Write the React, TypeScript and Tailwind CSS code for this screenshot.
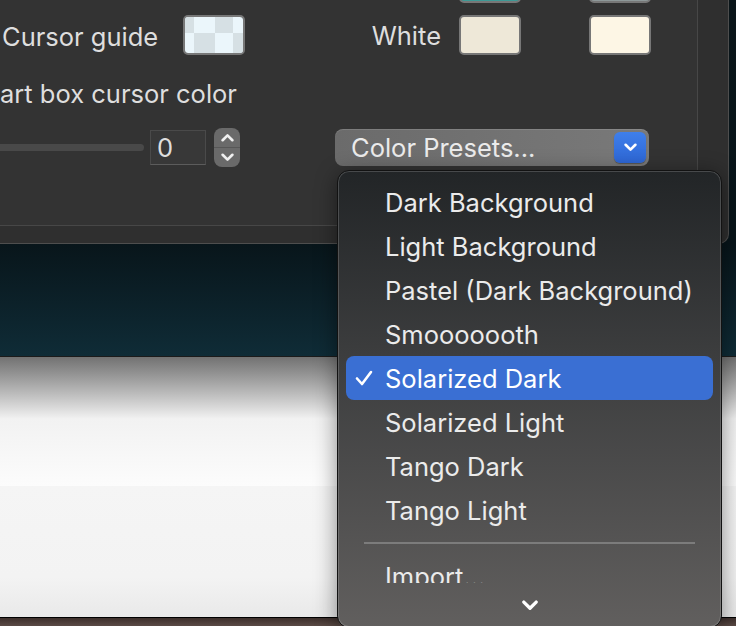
import React from 'react';

const presets = [
  'Dark Background',
  'Light Background',
  'Pastel (Dark Background)',
  'Smooooooth',
  'Solarized Dark',
  'Solarized Light',
  'Tango Dark',
  'Tango Light',
];

function Chevron({ dir = 'down', className = '', width = 2 }: { dir?: 'up' | 'down'; className?: string; width?: number }) {
  return (
    <svg viewBox="0 0 12 8" className={className} fill="none" stroke="currentColor" strokeWidth={width} strokeLinecap="round" strokeLinejoin="round">
      {dir === 'down' ? <polyline points="1.5,1.5 6,6 10.5,1.5" /> : <polyline points="1.5,6.5 6,2 10.5,6.5" />}
    </svg>
  );
}

function Swatch({ color }: { color: string }) {
  return <div className="w-[62px] h-[40px] shrink-0 rounded-[5px] border-2 border-[#777777]" style={{ backgroundColor: color }} />;
}

function CheckerSwatch() {
  // transparent colour well: light checker pattern
  return (
    <div className="w-[62px] h-[40px] shrink-0 rounded-[5px] border-2 border-[#777777] overflow-hidden">
      <svg width="58" height="36" viewBox="0 0 58 36">
        <rect width="58" height="36" fill="#ebf6fb" />
        <rect x="0" y="0" width="9" height="16" fill="#d6e0e4" />
        <rect x="30" y="0" width="18" height="16" fill="#d6e0e4" />
        <rect x="9" y="16" width="21" height="20" fill="#d6e0e4" />
        <rect x="48" y="16" width="10" height="20" fill="#d6e0e4" />
      </svg>
    </div>
  );
}

function PrefsWindow() {
  return (
    <div className="w-[729px] h-[244px] bg-[#2f2f2f] border-r border-b border-[#4e4e4e] rounded-br-[10px] overflow-hidden">
      <div className="w-[698px] h-[226px] bg-[#333333] border-r border-b border-[#474747] overflow-hidden text-[25.5px] text-[#dedede]">
        <div className="flex flex-col -mt-[37px]">
          {/* previous row, mostly scrolled out */}
          <div className="flex h-[40px]">
            <div className="w-[459px] shrink-0" />
            <Swatch color="#3d9a96" />
            <div className="w-[68px] shrink-0" />
            <Swatch color="#8e9899" />
          </div>

          <div className="flex items-center h-[40px] mt-[12px]">
            <div className="w-[183px] shrink-0 pl-[2px] pt-[3px] leading-none whitespace-nowrap">Cursor guide</div>
            <CheckerSwatch />
            <div className="w-[196px] shrink-0 pt-[1px] text-right leading-none">White</div>
            <div className="w-[18px] shrink-0" />
            <Swatch color="#eee8d8" />
            <div className="w-[68px] shrink-0" />
            <Swatch color="#fdf6e5" />
          </div>

          <div className="h-[30px] mt-[24px] leading-[30px] whitespace-nowrap">art box cursor color</div>

          <div className="flex items-center h-[39px] mt-[19px]">
            <div className="-ml-[10px] w-[154px] h-[7px] shrink-0 rounded-full bg-[#494949]" />
            <div className="ml-[6px] w-[56px] h-[35px] shrink-0 bg-[#383838] border border-[#4a4a4a] border-b-[#5c5c5c] flex items-center pl-[6px] leading-none">
              0
            </div>
            <div className="ml-[8px] w-[26px] h-[39px] shrink-0 rounded-[8px] bg-[#6a6a6a] flex flex-col text-[#f0f0f0]">
              <div className="flex-1 flex items-center justify-center">
                <Chevron dir="up" width={2.4} className="w-[13px] h-[9px]" />
              </div>
              <div className="h-px bg-[#575757]" />
              <div className="flex-1 flex items-center justify-center">
                <Chevron dir="down" width={2.4} className="w-[13px] h-[9px]" />
              </div>
            </div>
            <div className="ml-[95px] w-[314px] h-[37px] shrink-0 rounded-[8px] bg-gradient-to-r from-[#6b6b6b] to-[#797979] shadow-[inset_0_1px_0_rgba(255,255,255,0.12)] flex items-center pl-[16px] pr-[3px]">
              <span className="flex-1 leading-none text-[#ebebeb] whitespace-nowrap">Color Presets...</span>
              <div className="w-[32px] h-[31px] rounded-[6px] bg-gradient-to-b from-[#3f7fea] to-[#2e67d6] flex items-center justify-center text-white shadow-[0_1px_1px_rgba(0,0,0,0.3)]">
                <Chevron dir="down" width={2.4} className="w-[13px] h-[9px]" />
              </div>
            </div>
          </div>
        </div>
      </div>
    </div>
  );
}

function PresetsMenu() {
  return (
    <div className="absolute left-[337px] top-[170px] w-[385px] h-[458px] rounded-[12px] border border-[#121212] bg-gradient-to-b from-[#222527] via-[#3c3d3e] via-[40%] to-[#615f5e] shadow-[inset_0_0_0_1px_rgba(255,255,255,0.17),0_4px_22px_rgba(0,0,0,0.45)] overflow-hidden text-[25.5px] text-[#ebebeb]">
      <div className="h-[412px] overflow-hidden pt-[9px]">
        {presets.map((name) => {
          const selected = name === 'Solarized Dark';
          return (
            <div
              key={name}
              className={`mx-[8px] h-[44px] rounded-[8px] flex items-center whitespace-nowrap ${selected ? 'bg-[#3a6fd3] text-white' : ''}`}
            >
              <div className="w-[39px] shrink-0 pl-[9px] flex items-center">
                {selected && (
                  <svg viewBox="0 0 18 16" className="w-[18px] h-[16px]" fill="none" stroke="currentColor" strokeWidth="2.6" strokeLinecap="round" strokeLinejoin="round">
                    <polyline points="2,8.5 7,14 16,2" />
                  </svg>
                )}
              </div>
              <span className="leading-none pt-[2px]">{name}</span>
            </div>
          );
        })}
        <div className="mx-[26px] my-[10px] h-[2px] bg-[#7c7c7c]" />
        <div className="mx-[8px] h-[44px] flex items-center whitespace-nowrap">
          <div className="w-[39px] shrink-0" />
          <span className="leading-none pt-[2px]">Import...</span>
        </div>
      </div>
      <div className="h-[44px] flex items-center justify-center text-white">
        <Chevron dir="down" width={2.4} className="w-[18px] h-[11px]" />
      </div>
    </div>
  );
}

export default function App() {
  return (
    <div className="relative w-[736px] h-[626px] overflow-hidden bg-white font-[Inter,'Noto_Sans',sans-serif]">
      <div className="h-[357px] bg-gradient-to-b from-[#0a1519] via-[#08151a] via-[68%] to-[#0f2c37] border-b border-[#1b1b1b]">
        <PrefsWindow />
      </div>
      <div className="h-[129px] bg-gradient-to-b from-[#727272] via-[#f2f2f2] via-[48%] to-[#fcfcfc]" />
      <div className="h-[132px] bg-gradient-to-b from-[#f5f5f5] via-[#f3f3f3] via-[70%] to-[#e9e9e9] border-b border-black" />
      <div className="h-[8px] bg-gradient-to-b from-[#3e302c] to-[#5a4a45]" />
      <PresetsMenu />
    </div>
  );
}
